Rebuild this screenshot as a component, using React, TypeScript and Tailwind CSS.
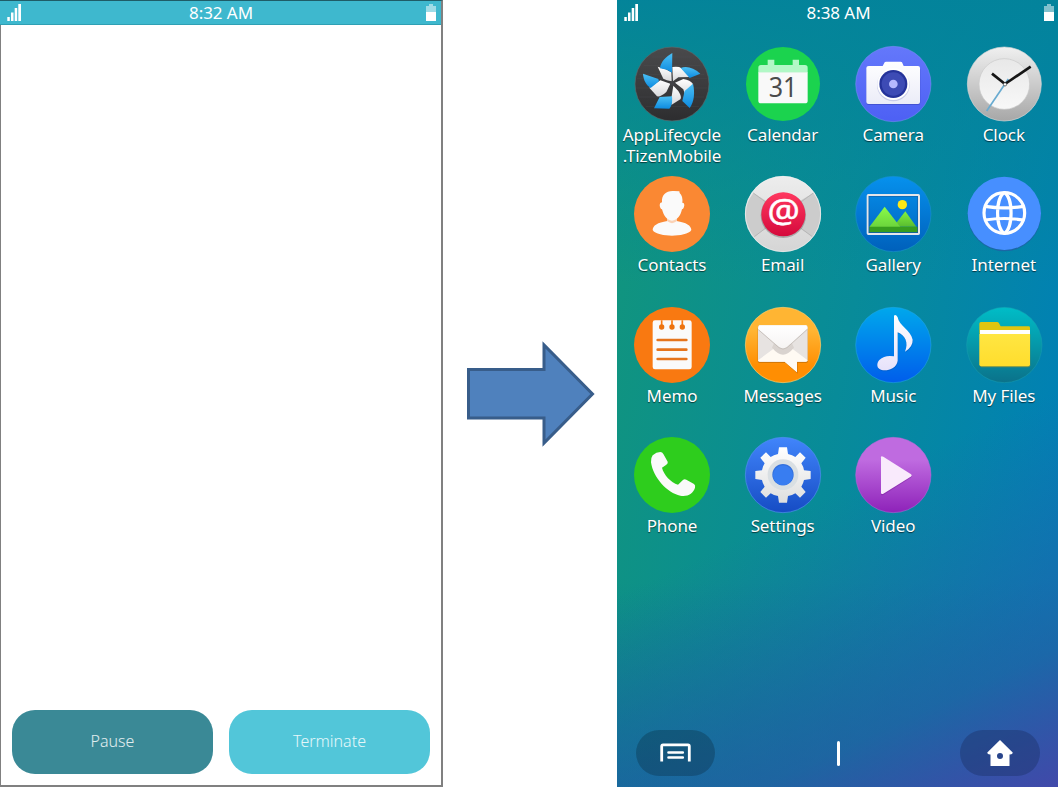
import type { ReactNode } from 'react'

function StatusBar({ time, className }: { time: string; className: string }) {
  return (
    <header className={`flex items-start justify-between ${className}`}>
      <svg className="ml-[7px] mt-1 h-[17px] w-[14px]" viewBox="0 0 14 17" fill="#fff">
        <path d="M0.3 13h2.5v4H0.3zM4 8.6h2.5V17H4zM7.7 4h2.5v13H7.7zM11.3 0h2.7v17h-2.7z" />
      </svg>
      <span className="pr-[5px] text-[17px] leading-[25px] tracking-[-0.05px] whitespace-nowrap text-white">{time}</span>
      <svg className="mt-1 h-[17px] w-[10px]" viewBox="0 0 10 17">
        <path d="M3 0h4v2h3v6H0V2h3z" fill="#fff" opacity="0.5" />
        <path d="M0 8h10v9H0z" fill="#fff" />
      </svg>
    </header>
  )
}

function Gradient({ id, from, to }: { id: string; from: string; to: string }) {
  return (
    <linearGradient id={id} x1="0" y1="0" x2="0" y2="1">
      <stop offset="0" stopColor={from} />
      <stop offset="1" stopColor={to} />
    </linearGradient>
  )
}

function Icon({ box, children }: { box: string; children: ReactNode }) {
  return (
    <svg className="size-[76px] shrink-0 overflow-visible" viewBox={box}>
      {children}
    </svg>
  )
}

const tizen = (
  <Icon box="51 137 228 228">
    <defs>
      <Gradient id="metal" from="#4a4a4c" to="#2d2d2f" />
      <Gradient id="blade" from="#4cc0f5" to="#0d8be0" />
      <Gradient id="fold" from="#ffffff" to="#d8d8da" />
    </defs>
    <circle cx="165" cy="251" r="111" fill="url(#metal)" stroke="#5c6a6d" strokeWidth="2" />
    <path d="M66 222h196M60 234h210M58 263h214M66 290h196M86 318h160M80 195h170M104 170h120" stroke="#5b5b5d" strokeWidth="1.5" opacity="0.45" />
    <path d="M122 199L146 207L163 216L164 243Q148 240 139 235Z" fill="url(#fold)" />
    <path d="M166 200Q187 198 192 203L222 230L184 231L168 243Z" fill="url(#fold)" />
    <path d="M174 247L199 236Q220 239 228 251L205 287L199 267Z" fill="url(#fold)" />
    <path d="M169 256L184 272Q196 291 190 297L163 314L164 288Z" fill="url(#fold)" />
    <path d="M97 262L130 240L160 250L148 275Q130 291 120 288Z" fill="url(#fold)" />
    <path d="M129 204C131 184 147 169 166 158L165 217L150 208Z" fill="url(#blade)" />
    <path d="M191 203C208 195 230 202 250 220L218 233Z" fill="url(#blade)" />
    <path d="M228 250C234 275 232 304 218 323L196 302L203 272Z" fill="url(#blade)" />
    <path d="M165 288C167 306 163 319 157 325L111 324L128 290Z" fill="url(#blade)" />
    <path d="M101 263C87 254 79 238 78 220L124 236L126 243Z" fill="url(#blade)" />
    <circle cx="166" cy="250" r="7" fill="#424246" />
  </Icon>
)

const calendar = (
  <Icon box="383 137 228 228">
    <circle cx="497" cy="251" r="111" fill="#1bd34e" />
    <path d="M451 178h20v16h55v-16h19v16h18q8 0 8 8v15H423v-15q0-8 8-8h20z" fill="#b2f8c6" />
    <path d="M423 216h148v85q0 8-8 8H431q-8 0-8-8z" fill="#f9f9f9" />
    <text x="497" y="291" textAnchor="middle" fontSize="80" fontWeight="400" fill="#4b4b4b" textLength="86" lengthAdjust="spacingAndGlyphs" style={{ fontFamily: '"Noto Sans", sans-serif' }}>
      31
    </text>
  </Icon>
)

const camera = (
  <Icon box="55 137 228 228">
    <defs>
      <Gradient id="cam" from="#6478fb" to="#4d60f4" />
      <Gradient id="body" from="#ffffff" to="#ebecf8" />
    </defs>
    <circle cx="170" cy="251" r="113" fill="url(#cam)" stroke="#7e90f5" strokeWidth="1.5" />
    <rect x="89" y="201" width="162" height="113" rx="7" fill="#303ca9" opacity="0.45" />
    <path d="M96 197h42l6-11q1-2 4-2h44q3 0 4 2l5 11h43q6 0 6 6v102q0 6-6 6H96q-7 0-7-6V203q0-6 7-6z" fill="url(#body)" />
    <circle cx="170" cy="254" r="49" fill="#c9cce9" />
    <circle cx="170" cy="251" r="48" fill="#fff" />
    <circle cx="170" cy="251" r="42" fill="#25339a" />
    <circle cx="170" cy="251" r="35" fill="#3d4bb5" />
    <circle cx="170" cy="251" r="13" fill="#b5b9ff" />
  </Icon>
)

const clock = (
  <Icon box="387 137 228 228">
    <defs>
      <Gradient id="bezel" from="#f0f0f0" to="#a7a7a7" />
      <Gradient id="face" from="#e8e8e8" to="#f8f8f8" />
    </defs>
    <circle cx="502" cy="251" r="111" fill="url(#bezel)" stroke="#d7d7d7" strokeWidth="2" />
    <circle cx="502" cy="251" r="76" fill="url(#face)" stroke="#c8c8c8" strokeWidth="2" />
    <path d="M449 332L514 236" stroke="#69abd0" strokeWidth="5" />
    <path d="M504 251L465 220" stroke="#151515" strokeWidth="8" />
    <path d="M504 251L581 199" stroke="#151515" strokeWidth="8" />
    <circle cx="504" cy="252" r="5" fill="#fff" stroke="#333" strokeWidth="2" />
  </Icon>
)

const contacts = (
  <Icon box="51 18 228 228">
    <circle cx="165" cy="132" r="114" fill="#fa8833" />
    <path d="M151 145v8Q107 160 107 180C113 192 143 197 165 197S217 192 223 180Q222 160 179 153v-8z" fill="#fafafa" />
    <path d="M151 145h28v9q-14 11-28 0z" fill="#fad2b6" />
    <path d="M135 97C133 73 149 61 171 63L187 64L188 69Q198 78 196 98Q202 98 202 105Q200 118 195 118C190 139 181 150 165 152C149 150 141 139 135 118Q129 117 128 105Q128 98 135 97Z" fill="#fafafa" />
  </Icon>
)

const email = (
  <Icon box="383 18 228 228">
    <defs>
      <Gradient id="mail" from="#ededed" to="#d5d5d5" />
      <Gradient id="seal" from="#ff375f" to="#d50a3c" />
    </defs>
    <circle cx="497" cy="132" r="114" fill="url(#mail)" />
    <path d="M408 69Q384 100 384 132T411 200L465 162V104Z" fill="#ccc" />
    <path d="M588 69Q611 100 611 132T585 200L528 162V104Z" fill="#ccc" />
    <path d="M408 69L497 135L588 69M411 200L497 135L585 200" fill="none" stroke="#b6b6b6" strokeWidth="3" />
    <circle cx="497" cy="132" r="113" fill="none" stroke="#f2f2f2" strokeWidth="2" />
    <circle cx="498" cy="136" r="68" fill="#777" opacity="0.5" />
    <circle cx="498" cy="133" r="66" fill="url(#seal)" />
    <text x="499" y="160" textAnchor="middle" fontSize="96" fill="#fff" stroke="#fff" strokeWidth="1.5" textLength="97" lengthAdjust="spacingAndGlyphs" style={{ fontFamily: '"Noto Sans", sans-serif' }}>
      @
    </text>
  </Icon>
)

const gallery = (
  <Icon box="55 18 228 228">
    <defs>
      <Gradient id="sky" from="#0691ed" to="#0060bb" />
      <Gradient id="hill" from="#8afc49" to="#6cd43c" />
      <Gradient id="hill2" from="#83f23e" to="#59bc30" />
    </defs>
    <circle cx="170" cy="132" r="113" fill="url(#sky)" stroke="#168fca" strokeWidth="2" />
    <circle cx="197" cy="104" r="14" fill="#ffe815" />
    <path d="M206 124L239 170H170Z" fill="url(#hill2)" />
    <path d="M144 110L191 171H98Z" fill="url(#hill)" />
    <path d="M98 170H243V187H98Z" fill="#379d1e" />
    <rect x="93" y="75" width="154" height="117" rx="2" fill="none" stroke="#e5e5e9" strokeWidth="6" />
    <rect x="97" y="79" width="146" height="109" fill="none" stroke="#204d86" strokeWidth="2" opacity="0.6" />
  </Icon>
)

const internet = (
  <Icon box="387 18 228 228">
    <circle cx="502" cy="134" r="110" fill="#2060a5" opacity="0.8" />
    <circle cx="502" cy="130" r="110" fill="#478fff" />
    <g fill="none" stroke="#fff" strokeWidth="9.5">
      <circle cx="502" cy="129" r="61" />
      <path d="M502 68C475 84 475 174 502 190M502 68C529 84 529 174 502 190M444 109Q502 118 560 109M444 150Q502 141 560 150" />
    </g>
  </Icon>
)

const memo = (
  <Icon box="51 20 228 228">
    <circle cx="165" cy="134" r="114" fill="#f97911" />
    <rect x="107" y="60" width="117" height="147" rx="7" fill="#fafafa" />
    <path d="M134 60v18M165 60v18M196 60v18" stroke="#f97911" strokeWidth="5" />
    <g fill="#ed730f">
      <circle cx="134" cy="80" r="8" />
      <circle cx="165" cy="80" r="8" />
      <circle cx="196" cy="80" r="8" />
    </g>
    <path d="M122 119H208M122 148H208M122 176H208" stroke="#e5741c" strokeWidth="8" strokeLinecap="round" />
  </Icon>
)

const messages = (
  <Icon box="383 20 228 228">
    <defs>
      <linearGradient id="msg" x1="0" y1="0" x2="0" y2="1">
        <stop offset="0.3" stopColor="#ffb533" />
        <stop offset="0.78" stopColor="#ff8e02" />
      </linearGradient>
      <Gradient id="flap" from="#ffffff" to="#f6f4f3" />
    </defs>
    <circle cx="497" cy="134" r="113" fill="url(#msg)" stroke="#ffd06e" strokeWidth="2" />
    <path d="M426 79H567Q572 79 572 84V182Q572 188 566 188H541V220L505 188H427Q421 188 421 182V84Z" fill="#a95e08" opacity="0.5" />
    <path d="M427 75H566Q571 75 571 80V178Q571 184 565 184H539V216L502 184H427Q422 184 422 178V80Q422 75 427 75Z" fill="#e7e3e1" />
    <path d="M422 180L476 140H518L571 180Q571 184 565 184H539V216L502 184H427Q422 184 422 180Z" fill="#fffaf3" />
    <path d="M470 129L524 129L530 142Q512 163 497 163Q482 163 464 142Z" fill="#d9d3cf" />
    <path d="M426 75H567L571 84L509 140Q497 149 485 140L422 85Z" fill="url(#flap)" />
    <path d="M423 88L485 142Q497 151 509 142L570 87" fill="none" stroke="#c3bcb7" strokeWidth="2.5" />
  </Icon>
)

const music = (
  <Icon box="55 20 228 228">
    <defs>
      <Gradient id="mus" from="#00a8ec" to="#005deb" />
      <Gradient id="note" from="#ffffff" to="#e7e2fa" />
    </defs>
    <circle cx="170" cy="134" r="113" fill="url(#mus)" stroke="#24a8e7" strokeWidth="1.5" />
    <path d="M172 46Q177 41 183 51C187 76 222 90 228 118Q229 139 205 154C217 127 205 104 183 96V181C180 204 153 213 135 209C119 205 119 189 128 179Q145 163 172 168Z" fill="#0759b7" opacity="0.5" transform="translate(1 3)" />
    <path d="M172 46Q177 41 183 51C187 76 222 90 228 118Q229 139 205 154C217 127 205 104 183 96V181C180 204 153 213 135 209C119 205 119 189 128 179Q145 163 172 168Z" fill="url(#note)" />
  </Icon>
)

const files = (
  <Icon box="387 20 228 228">
    <defs>
      <Gradient id="fil" from="#00bdc7" to="#0b728a" />
      <Gradient id="sheet" from="#ffe642" to="#ffdd2d" />
    </defs>
    <circle cx="502" cy="134" r="113" fill="url(#fil)" stroke="#189fb0" strokeWidth="1.5" />
    <path d="M427 70Q427 65 432 65H480Q484 65 486 69L491 78H575Q579 78 579 82V100H427Z" fill="#e0c50f" />
    <path d="M429 89H579V105H429Z" fill="#fff" />
    <path d="M427 100H579V193Q579 199 573 199H433Q427 199 427 193Z" fill="#8d8f37" transform="translate(1 2)" opacity="0.7" />
    <path d="M427 101H579V192Q579 198 573 198H433Q427 198 427 192Z" fill="url(#sheet)" />
  </Icon>
)

const phone = (
  <Icon box="51 21 228 228">
    <circle cx="165" cy="135" r="114" fill="#2ecd1d" />
    <path d="M107 76Q118 66 130 66Q136 66 139 72L152 95Q154 100 148 104L135 113C140 134 162 158 183 164L197 151Q202 145 208 149L231 162Q236 166 234 173C229 190 212 201 190 197C151 190 108 142 102 97Q101 84 107 76Z" fill="#fafafa" />
  </Icon>
)

const settings = (
  <Icon box="383 21 228 228">
    <defs>
      <Gradient id="set" from="#4185fb" to="#164cc4" />
      <Gradient id="gear" from="#ffffff" to="#dedede" />
    </defs>
    <circle cx="497" cy="135" r="113" fill="url(#set)" stroke="#5090ef" strokeWidth="2" />
    <path
      d="M485 52H509L512 72Q525 75 534 81L548 67L565 83L552 100Q558 109 560 121L580 123V147L560 150Q558 160 552 170L565 186L548 203L534 190Q525 196 512 198L509 218H485L482 198Q469 196 460 190L446 203L429 186L442 170Q436 160 434 150L414 147V123L434 121Q436 109 442 100L429 83L446 67L460 81Q469 75 482 72Z"
      fill="url(#gear)"
    />
    <circle cx="497" cy="134" r="46" fill="#d9dfe3" />
    <circle cx="497" cy="134" r="32" fill="#3270dd" />
    <circle cx="497" cy="136" r="30" fill="#387df1" />
  </Icon>
)

const video = (
  <Icon box="715 21 228 228">
    <defs>
      <linearGradient id="vid" x1="0" y1="0" x2="0" y2="1">
        <stop offset="0.3" stopColor="#bf6be0" />
        <stop offset="1" stopColor="#8e22b9" />
      </linearGradient>
    </defs>
    <circle cx="830" cy="135" r="113" fill="url(#vid)" stroke="#b76bd9" strokeWidth="1.5" />
    <path d="M793 83Q793 76 800 80L882 132Q888 136 882 140L800 192Q793 195 793 189Z" fill="#7b1f9d" opacity="0.5" transform="translate(0 3)" />
    <path d="M793 82Q793 76 800 80L882 132Q888 136 882 140L800 191Q793 194 793 188Z" fill="#f9eafc" />
  </Icon>
)

const apps: { name: string[]; icon: ReactNode }[] = [
  { name: ['AppLifecycle', '.TizenMobile'], icon: tizen },
  { name: ['Calendar'], icon: calendar },
  { name: ['Camera'], icon: camera },
  { name: ['Clock'], icon: clock },
  { name: ['Contacts'], icon: contacts },
  { name: ['Email'], icon: email },
  { name: ['Gallery'], icon: gallery },
  { name: ['Internet'], icon: internet },
  { name: ['Memo'], icon: memo },
  { name: ['Messages'], icon: messages },
  { name: ['Music'], icon: music },
  { name: ['My Files'], icon: files },
  { name: ['Phone'], icon: phone },
  { name: ['Settings'], icon: settings },
  { name: ['Video'], icon: video },
]

function AppScreen() {
  return (
    <section className="flex h-[787px] w-[443px] flex-col border border-r-2 border-b-2 border-[#808080] border-t-[#1f5c67]">
      <StatusBar time="8:32 AM" className="-mt-px -ml-px h-[25px] border-t border-b border-t-[#1f5c67] border-b-[#2fa0b4] bg-[#3eb8ce] pr-[5px] *:-mt-px [&>svg]:mt-[3px]" />
      <div className="flex-1" />
      <div className="flex gap-4 pb-[11px] pl-[11px] text-[16px] font-light text-white/85">
        <button className="h-16 w-[201px] rounded-[23px] bg-[#3a8996] pb-0.5">Pause</button>
        <button className="h-16 w-[201px] rounded-[23px] bg-[#52c6d9] pb-0.5">Terminate</button>
      </div>
    </section>
  )
}

function HomeScreen() {
  return (
    <section className="flex h-[787px] w-[441px] flex-col overflow-hidden bg-[linear-gradient(155deg,transparent_60%,rgba(44,92,165,0.6)_86%,#4149aa_100%),linear-gradient(180deg,rgba(3,131,155,0.95)_0%,rgba(3,131,155,0)_36%),linear-gradient(180deg,transparent_74%,rgba(8,104,155,0.75)_100%),linear-gradient(100deg,#12967a_0%,#088b99_50%,#0080b6_92%)]">
      <StatusBar time="8:38 AM" className="h-[25px] pr-[4px]" />
      <main className="-ml-[0.3px] mt-[21px] grid w-[442.4px] auto-rows-[130.3px] grid-cols-4">
        {apps.map((app) => (
          <div key={app.name[0]} className="flex flex-col items-center">
            {app.icon}
            <div className="pt-[2px] text-center text-[17px] leading-[21px] tracking-[-0.1px] text-white [text-shadow:0_1px_1px_rgba(0,0,0,0.6)]">
              {app.name.map((line) => (
                <div key={line}>{line}</div>
              ))}
            </div>
          </div>
        ))}
      </main>
      <nav className="mt-auto flex items-center justify-between pr-[18px] pb-[11px] pl-[19px]">
        <button className="flex h-[46px] w-[79px] items-center justify-center rounded-full bg-black/20">
          <svg className="-mt-px h-[19px] w-[31px]" viewBox="0 0 31 19" fill="none" stroke="#fff">
            <path d="M1.7 18.5V3.2Q1.7 1.8 3 1.8H28Q29.3 1.8 29.3 3.2V18.5" strokeWidth="2.8" />
            <path d="M8.5 9.5H22.8M8.5 14.5H22.8" strokeWidth="2.6" strokeLinecap="round" />
          </svg>
        </button>
        <span className="-mr-[2px] h-[25px] w-[3.5px] rounded-sm bg-white" />
        <button className="flex h-[46px] w-[80px] items-center justify-center rounded-full bg-[#1c336b]/45">
          <svg className="h-[26px] w-[26px]" viewBox="0 0 26 26" fill="#fff">
            <path fillRule="evenodd" d="M13 0L25.7 12.5Q26 14.7 22.5 14.5V26H3.5V14.5Q0 14.7 .3 12.5ZM13 13A3 3 0 1 0 13 19A3 3 0 1 0 13 13Z" />
          </svg>
        </button>
      </nav>
    </section>
  )
}

export default function App() {
  return (
    <div className="flex h-[787px] w-[1058px] justify-between overflow-hidden bg-white font-['Noto_Sans','Open_Sans',sans-serif]">
      <AppScreen />
      <svg className="h-[106px] w-[130px] shrink-0 self-center" viewBox="465 341 130 106">
        <path d="M468.5 369.5H544V345L592.5 394L544 443V418H468.5Z" fill="#4f81bd" stroke="#385d8a" strokeWidth="3" />
      </svg>
      <HomeScreen />
    </div>
  )
}
